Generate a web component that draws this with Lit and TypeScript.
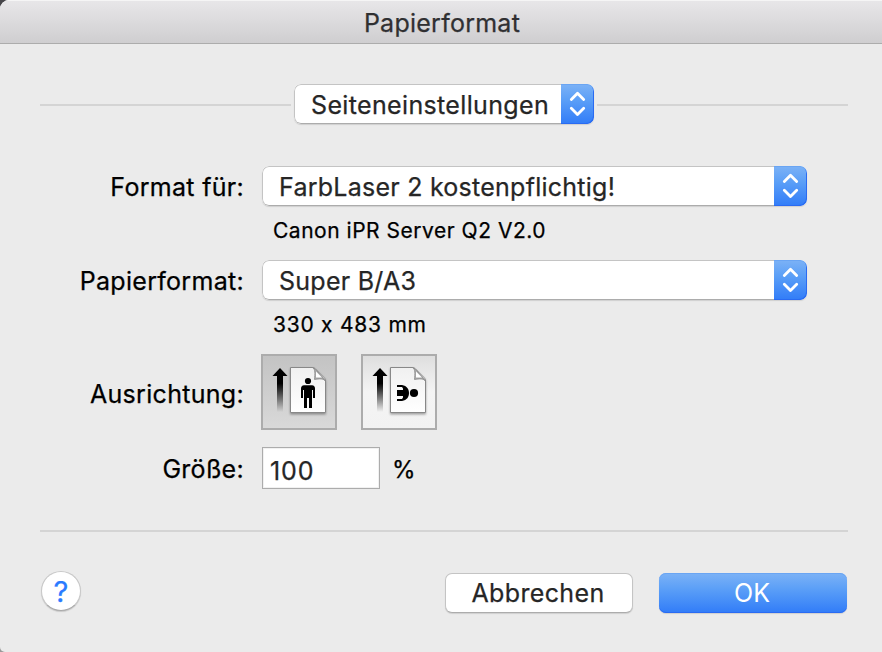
import { LitElement, html, css, svg } from "lit";
import { customElement, property } from "lit/decorators.js";

@customElement("popup-button")
class PopupButton extends LitElement {
  static styles = css`
    :host {
      display: flex;
      box-sizing: border-box;
      height: 40px;
      border-radius: 7px;
      background: #fff;
      box-shadow: 0 1px 1px rgba(0, 0, 0, 0.12);
      overflow: hidden;
    }
    .value {
      flex: 1;
      box-sizing: border-box;
      padding: 2px 0 0 16px;
      border: 1px solid #c4c4c4;
      border-bottom-color: #acacac;
      border-right: 0;
      border-radius: 7px 0 0 7px;
      white-space: nowrap;
      color: #262626;
      display: flex;
      align-items: center;
    }
    .arrows {
      width: 33px;
      box-sizing: border-box;
      background: linear-gradient(#7cb2f6, #5b9ff7 40%, #317cf8);
      border-radius: 0 7px 7px 0;
      box-shadow: inset 0 1px #6aa5f3, inset -1px -1px #2a6bf2;
    }
    svg {
      display: block;
    }
  `;
  render() {
    return html`
      <div class="value"><slot></slot></div>
      <div class="arrows">
        <svg width="33" height="40" fill="none" stroke="#fff" stroke-width="2.8" stroke-linecap="round" stroke-linejoin="round">
          <path d="M10.300 15.500 16.500 9.200 22.700 15.500M10.300 24.300 16.500 30.600 22.700 24.300" />
        </svg>
      </div>
    `;
  }
}

@customElement("orientation-button")
class OrientationButton extends LitElement {
  @property() kind = "portrait";

  static styles = css`
    :host {
      display: block;
      box-sizing: border-box;
      width: 76px;
      height: 76px;
      border: 2px solid #acacac;
      background: linear-gradient(#dedede, #f4f4f4 50%, #f2f2f2);
    }
    :host([kind="portrait"]) {
      background: linear-gradient(#c3c3c3, #d9d9d9);
    }
    svg {
      display: block;
    }
  `;
  render() {
    const person =
      this.kind === "portrait"
        ? svg`
          <circle cx="47" cy="27" r="3.1" />
          <path d="M43 31.200H51Q54 31.500 54 34.500V44H52V36H51V54H48V44H46V54H43V36H42V44H40V34.500Q40 31.500 43 31.200Z" />`
        : svg`
          <circle cx="53" cy="39" r="4.100" />
          <path d="M36 31H41C46 32 48 35 48 39S46 46 41 47H36V45H41L42 43.500V42H36V36H42V34.500L41 33H36Z" />`;
    return html`
      <svg width="72" height="72" viewBox="2 2 72 72">
        <defs>
          <linearGradient id="fade" x2="0" y2="1">
            <stop offset="0.35" />
            <stop offset="1" stop-opacity="0" />
          </linearGradient>
          <linearGradient id="sheet" x2="0" y2="1">
            <stop stop-color="#f0f0f0" />
            <stop offset="1" stop-color="#fff" />
          </linearGradient>
          <filter id="shade" x="-20%" y="-20%" width="140%" height="150%">
            <feDropShadow dx="0" dy="1.500" stdDeviation="1" flood-opacity="0.350" />
          </filter>
        </defs>
        <path d="M19 14 26.500 22H22V58H16V22H11.500Z" fill="url(#fade)" />
        <path d="M29.500 13.500H51C53.500 13.500 54 14.500 55 15.500L63 23.500C64 24.500 64.500 25.500 64.500 27V58.500H29.500Z" fill="url(#sheet)" stroke="#888" filter="url(#shade)" />
        <path d="M51.500 13.500C54.500 15 54 20 53.500 25.500C58 24.500 63 24.500 64.500 27L54.500 15Z" fill="#aaa" stroke="#888" stroke-width="0.800" />
        <path d="M55 17.500V23.500H61Z" fill="#fff" />
        ${person}
      </svg>
    `;
  }
}

@customElement("app-root")
class AppRoot extends LitElement {
  static styles = css`
    :host {
      display: block;
      width: 882px;
      height: 652px;
      overflow: hidden;
      background: linear-gradient(#47464a 50%, #999 50%);
      font: 25px Inter, "Liberation Sans", sans-serif;
      font-feature-settings: "calt" 0;
      letter-spacing: 0.25px;
      -webkit-text-stroke: 0.25px;
      color: #000;
    }
    .window {
      height: 652px;
      border-radius: 9px 0 0 5px;
      background: #ebebeb;
      overflow: hidden;
      display: flex;
      flex-direction: column;
    }
    .title {
      height: 44px;
      flex: none;
      box-sizing: border-box;
      border-bottom: 1px solid #acacac;
      background: linear-gradient(#e8e7e9, #cfced0);
      box-shadow: inset 0 1px #f5f5f5;
      text-align: center;
      line-height: 47px;
      padding-left: 2px;
      color: #303032;
      letter-spacing: 0.25px;
    }
    .section {
      display: flex;
      align-items: center;
      gap: 3px;
      margin: 40px 34px 0 40px;
    }
    .rule {
      height: 2px;
      background: #d4d4d4;
    }
    .section .rule {
      width: 251px;
      margin-top: 2px;
    }
    .section popup-button {
      width: 300px;
      letter-spacing: 0.35px;
    }
    .form {
      display: grid;
      grid-template-columns: 244px 545px;
      column-gap: 18px;
      grid-template-rows: 40px 54px 40px 54px 76px 17px 42px;
      margin-top: 42px;
      align-items: center;
    }
    .label {
      text-align: right;
      white-space: nowrap;
      padding-top: 2px;
      letter-spacing: 0.3px;
    }
    .orientation {
      padding-top: 4px;
    }
    .note {
      grid-column: 2;
      font-size: 21px;
      letter-spacing: 0.52px;
      padding: 0 0 6px 11px;
    }
    .size {
      letter-spacing: 0.75px;
    }
    .choices {
      display: flex;
      gap: 24px;
      margin-left: -1px;
    }
    .scale {
      grid-row: 7;
      display: flex;
      align-items: center;
      gap: 12px;
    }
    .scale-label {
      grid-row: 7;
    }
    .percent {
      font-size: 24px;
      padding-top: 2px;
    }
    .field {
      box-sizing: border-box;
      width: 118px;
      height: 42px;
      border: 1px solid #acacac;
      box-shadow: inset 0 0 0 1px #f1f1f1;
      background: #fff;
      color: #262626;
      padding-left: 7px;
      line-height: 46px;
      letter-spacing: 0.9px;
    }
    .bottom {
      margin: 41px 34px 0 40px;
      width: 808px;
      flex: none;
    }
    .actions {
      display: flex;
      align-items: flex-start;
      padding: 39px 35px 0 41px;
    }
    .help {
      width: 40px;
      height: 40px;
      box-sizing: border-box;
      border-radius: 50%;
      border: 1px solid #c8c8c8;
      border-bottom-color: #aaa;
      background: #fff;
      box-shadow: 0 1px 1px rgba(0, 0, 0, 0.15);
      color: #2a7bff;
      font-size: 29px;
      line-height: 39px;
      text-align: center;
    }
    .button {
      box-sizing: border-box;
      width: 188px;
      height: 40px;
      margin-top: 2px;
      border-radius: 7px;
      border: 1px solid #c4c4c4;
      border-bottom-color: #acacac;
      background: #fff;
      box-shadow: 0 1px 1px rgba(0, 0, 0, 0.12);
      color: #262626;
      line-height: 38px;
      text-align: center;
    }
    .cancel {
      margin-left: auto;
      margin-right: 26px;
      padding-right: 2px;
      letter-spacing: 0.35px;
    }
    .ok {
      border: 0;
      line-height: 40px;
      padding-right: 2px;
      letter-spacing: 0;
      -webkit-text-stroke: 0;
      color: #fff;
      background: linear-gradient(#7cb2f6, #5b9ff7 40%, #317cf8);
      box-shadow: inset 0 1px #6aa5f3, inset 0 -1px #2a6bf2, 0 1px 1px rgba(0, 0, 0, 0.12);
    }
  `;
  render() {
    return html`
      <div class="window">
        <div class="title">Papierformat</div>
        <div class="section">
          <div class="rule"></div>
          <popup-button>Seiteneinstellungen</popup-button>
          <div class="rule"></div>
        </div>
        <div class="form">
          <div class="label">Format für:</div>
          <popup-button>FarbLaser 2 kostenpflichtig!</popup-button>
          <div class="note">Canon iPR Server Q2 V2.0</div>
          <div class="label">Papierformat:</div>
          <popup-button>Super B/A3</popup-button>
          <div class="note size">330 x 483 mm</div>
          <div class="label orientation">Ausrichtung:</div>
          <div class="choices">
            <orientation-button kind="portrait"></orientation-button>
            <orientation-button kind="landscape"></orientation-button>
          </div>
          <div class="label scale-label">Größe:</div>
          <div class="scale">
            <div class="field">100</div>
            <div class="percent">%</div>
          </div>
        </div>
        <div class="rule bottom"></div>
        <div class="actions">
          <div class="help">?</div>
          <div class="button cancel">Abbrechen</div>
          <div class="button ok">OK</div>
        </div>
      </div>
    `;
  }
}
